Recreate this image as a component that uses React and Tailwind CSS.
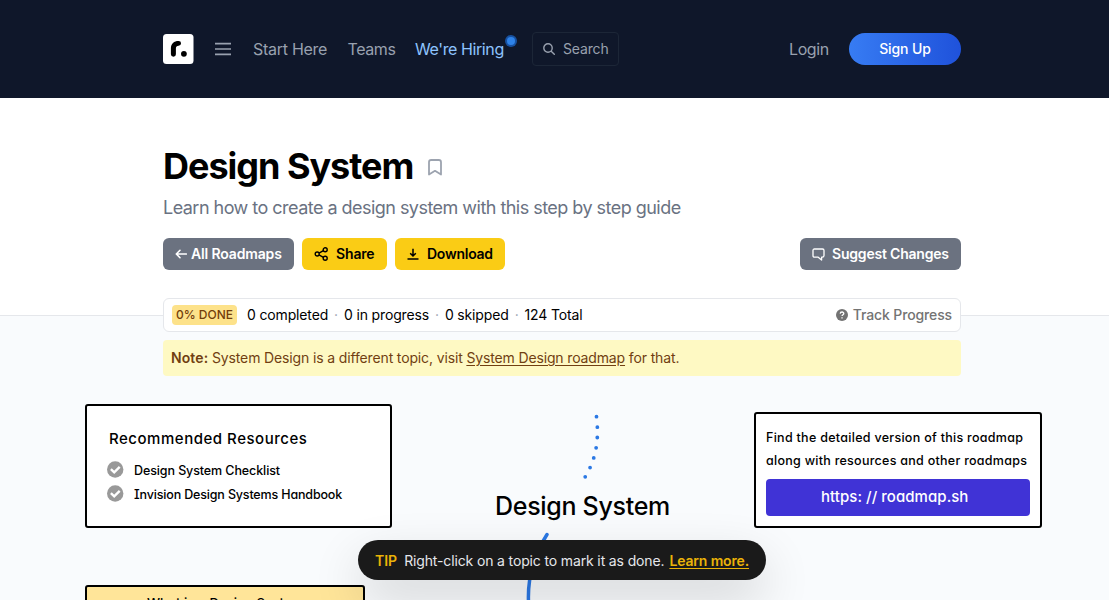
import React from "react";

const board = "font-['Inter','Liberation_Sans',sans-serif] [font-feature-settings:'cv11','cv08'] whitespace-nowrap font-medium";

function Header() {
  return (
    <header className="h-[98px] bg-[#0f172a] text-gray-400">
      <div className="ml-[163px] flex h-full w-[798px] items-center justify-between">
        <div className="flex items-center">
          <svg width="31" height="30" viewBox="0 0 31 30">
            <rect width="30.5" height="30" rx="3.5" fill="#fff" />
            <path d="M7.9 14.2C7.9 9.6 11 6.9 15.6 6.9A2.45 2.45 0 0 1 15.6 11.8C13.8 11.8 12.9 12.6 12.9 14.4V20.2A2.5 2.5 0 0 1 7.9 20.2Z" />
            <circle cx="20.9" cy="19.8" r="2.9" />
          </svg>
          <svg className="ml-[21px]" width="16" height="14" viewBox="0 0 16 14" stroke="currentColor" strokeWidth="1.7">
            <path d="M0 1.7h16M0 7h16M0 12.3h16" />
          </svg>
          <a className="ml-[22px] w-[75px] whitespace-nowrap text-base tracking-[-0.28px]">Start Here</a>
          <a className="ml-[19.5px] w-[47.5px] whitespace-nowrap text-base tracking-[-0.42px]">Teams</a>
          <a className="relative ml-5 w-[89px] whitespace-nowrap text-base tracking-[-0.4px] text-blue-300">
            We're Hiring
            <span className="absolute top-[-2px] right-[-13px] flex size-3 items-center justify-center rounded-full bg-[#17509f]">
              <span className="size-2 rounded-full bg-[#2e82e8]" />
            </span>
          </a>
          <button className="ml-7 flex h-[34px] w-[87px] items-center rounded border border-[#1c2637] pl-[10px] text-sm">
            <svg className="mr-2 shrink-0" width="12" height="12" viewBox="0 0 12 12" fill="none" stroke="currentColor" strokeWidth="1.4" strokeLinecap="round">
              <circle cx="5" cy="5" r="4.2" />
              <path d="M8.2 8.2 11.3 11.3" />
            </svg>
            <span className="whitespace-nowrap tracking-[-0.15px]">Search</span>
          </button>
        </div>
        <div className="flex items-center">
          <a className="mr-5 w-10 whitespace-nowrap text-base tracking-[-0.4px]">Login</a>
          <button className="h-8 w-28 rounded-full bg-linear-to-r/srgb from-[#377cf3] to-[#1f52db] text-sm font-medium tracking-[-0.1px] text-white">Sign Up</button>
        </div>
      </div>
    </header>
  );
}

function Hero() {
  return (
    <section className="h-[218px] border-b border-gray-200 bg-white">
      <div className="ml-[163px] w-[798px] pt-12">
        <div className="flex h-10 items-center">
          <h1 className="w-[251px] whitespace-nowrap text-4xl font-bold tracking-[-1.02px] text-black">Design System</h1>
          <svg className="mt-[3px] ml-[14px]" width="14" height="17" viewBox="0 0 14 17" fill="none" stroke="#9ca3af" strokeWidth="1.8" strokeLinejoin="round" strokeLinecap="round">
            <path d="M1 3.2C1 1.8 1.8 1 3.2 1h7.6C12.2 1 13 1.8 13 3.2V15.5L7 11.8 1 15.5Z" />
          </svg>
        </div>
        <p className="mt-2 h-7 whitespace-nowrap text-lg leading-7 tracking-[-0.53px] text-gray-500">Learn how to create a design system with this step by step guide</p>
        <div className="mt-4 flex h-8 text-sm font-semibold">
          <button className="flex w-[131px] items-center rounded-md bg-[#6b7280] pl-3 whitespace-nowrap text-white">
            <svg className="mr-1" width="12" height="12" viewBox="0 0 12 12" fill="none" stroke="currentColor" strokeWidth="1.6" strokeLinecap="round" strokeLinejoin="round">
              <path d="M11.3 6H1.5M5 2.3 1.3 6 5 9.7" />
            </svg>
            <span className="tracking-[-0.15px]">All Roadmaps</span>
          </button>
          <button className="ml-2 flex w-[85px] items-center rounded-md bg-[#facc15] pl-3 text-black">
            <svg className="mr-2" width="14" height="14" viewBox="0 0 14 14" fill="none" stroke="currentColor" strokeWidth="1.4">
              <circle cx="3.2" cy="7" r="2" />
              <circle cx="11.2" cy="2.8" r="2" />
              <circle cx="11.2" cy="11.2" r="2" />
              <path d="M5 6.1 9.4 3.7M5 7.9 9.4 10.3" />
            </svg>
            <span className="tracking-[-0.15px]">Share</span>
          </button>
          <button className="ml-2 flex w-[110px] items-center rounded-md bg-[#facc15] pl-3 text-black">
            <svg className="mr-2" width="12" height="12" viewBox="0 0 12 12" fill="none" stroke="currentColor" strokeWidth="1.5">
              <path d="M6 .8V8M3.2 5.2 6 8l2.8-2.8M.5 11h11" />
            </svg>
            <span className="tracking-[-0.25px]">Download</span>
          </button>
          <button className="ml-auto flex w-[161px] items-center rounded-md bg-[#6b7280] pl-3 whitespace-nowrap text-white">
            <svg className="mr-[7px]" width="13" height="13" viewBox="0 0 13 13" fill="none" stroke="currentColor" strokeWidth="1.3" strokeLinejoin="round">
              <path d="M2.5 1h8Q12 1 12 2.5v5Q12 9.2 10.3 9.2H9.6V12L6.2 9.2H2.5Q1 9.2 1 7.7V2.5Q1 1 2.5 1Z" />
            </svg>
            <span className="tracking-[-0.2px]">Suggest Changes</span>
          </button>
        </div>
      </div>
    </section>
  );
}

function Progress() {
  const stats = ["0 completed", "0 in progress", "0 skipped", "124 Total"];
  return (
    <div className="relative -mt-[18px] ml-[163px] w-[798px]">
      <div className="flex h-[34px] items-center rounded-md border border-gray-200 bg-white pr-2 pl-2 text-sm">
        <span className="mr-[10px] flex h-5 w-[65px] items-center justify-center rounded-sm bg-[#fde28a] text-xs font-medium whitespace-nowrap text-yellow-900">0% DONE</span>
        <div className="flex whitespace-nowrap text-black">
          {stats.map((s, i) => (
            <span key={s} className="tracking-[-0.15px]">
              {i > 0 && <span className="mx-[6px] text-gray-400">·</span>}
              {s}
            </span>
          ))}
        </div>
        <span className="ml-auto flex items-center font-medium whitespace-nowrap text-[#737373]">
          <svg className="mr-[5px]" width="12" height="12" viewBox="0 0 12 12">
            <circle cx="6" cy="6" r="6" fill="currentColor" />
            <path d="M4.2 4.6C4.3 2.4 7.9 2.5 7.8 4.6 7.7 5.8 6 5.7 6 7.1M6 8.3v1.2" fill="none" stroke="#fff" strokeWidth="1.3" />
          </svg>
          <span className="tracking-[-0.13px]">Track Progress</span>
        </span>
      </div>
      <p className="mt-2 h-9 rounded-sm bg-[#fef9c3] pl-2 text-sm leading-9 tracking-[-0.14px] whitespace-nowrap text-[#713f12]">
        <b className="font-semibold tracking-[0.1px]">Note:</b> System Design is a different topic, visit <a className="underline underline-offset-2">System Design roadmap</a> for that.
      </p>
    </div>
  );
}

function Check() {
  return (
    <svg className="mb-[3px]" width="17" height="17" viewBox="0 0 17 17">
      <circle cx="8.2" cy="8.5" r="8.2" fill="#999" />
      <path d="m3.9 8.2 3.3 3.2 5.5-5.6" fill="none" stroke="#fff" strokeWidth="2.4" />
    </svg>
  );
}

function Board() {
  return (
    <div className="absolute inset-0 text-black">
      <svg className="absolute inset-0" width="1109" height="600" fill="none" stroke="#2b78e4" strokeLinecap="round">
        <path d="M596.5 416.7C599 438 597 458 584.5 478" strokeWidth="3.8" strokeDasharray="0 10.4" />
        <path d="M547 534.5Q527 566 528.5 602" strokeWidth="3.5" />
      </svg>
      <div className="absolute top-[404px] left-[85px] h-[124px] w-[307px] rounded-[3px] border-2 border-black bg-white">
        <h2 className={`${board} mt-[21px] ml-[22px] text-[15px] leading-6 tracking-[0.52px]`}>Recommended Resources</h2>
        <div className="mt-2 ml-5 flex h-6 items-center gap-[10px]">
          <Check />
          <span className={`${board} text-[12.5px] tracking-[-0.1px]`}>Design System Checklist</span>
        </div>
        <div className="ml-5 flex h-6 items-center gap-[10px]">
          <Check />
          <span className={`${board} text-[12.5px] tracking-[-0.16px]`}>Invision Design Systems Handbook</span>
        </div>
      </div>
      <div className="absolute top-[412px] left-[754px] h-[116px] w-[288px] rounded-[3px] border-2 border-black bg-white px-[10px] pt-3">
        <p className={`${board} text-[12.5px] leading-[23px]`}>
          <span className="block tracking-[0.29px]">Find the detailed version of this roadmap</span>
          <span className="block tracking-[0.27px]">along with resources and other roadmaps</span>
        </p>
        <div className="mt-[7px] flex h-[37px] w-[264px] items-center rounded-sm bg-[#4033d6] pl-[55px] text-white">
          <span className={`${board} text-[15px] tracking-[0.05px]`}>https: // roadmap.sh</span>
        </div>
      </div>
      <div className={`${board} absolute top-[488px] left-[495px] text-[25px] leading-9 tracking-[-0.3px]`}>Design System</div>
      <div className="absolute top-[585px] left-[85px] h-[50px] w-[280px] rounded-[3px] border-2 border-black bg-[#ffe599] pt-[6px] pl-[60px]">
        <span className={`${board} block text-[13px] leading-5 tracking-[0.05px]`}>What is a Design System</span>
      </div>
    </div>
  );
}

function Tip() {
  return (
    <div className="absolute top-[540px] left-[358px] flex h-10 w-[408px] items-center rounded-full bg-[#1a1a1a] pt-px pl-[17px] text-sm whitespace-nowrap text-gray-200 shadow-[0_20px_50px_rgba(0,0,0,0.16)]">
      <b className="mr-[7px] font-semibold text-[#eab308]">TIP</b>
      <span className="mr-[5px] tracking-[-0.14px]">Right-click on a topic to mark it as done.</span>
      <a className="font-semibold tracking-[-0.15px] text-[#eab308] underline underline-offset-2">Learn more.</a>
    </div>
  );
}

export default function App() {
  return (
    <div className="relative h-[600px] w-[1109px] overflow-hidden bg-[#f9fbfd] font-['Inter','Liberation_Sans',sans-serif]">
      <Header />
      <Hero />
      <Board />
      <Progress />
      <Tip />
    </div>
  );
}
